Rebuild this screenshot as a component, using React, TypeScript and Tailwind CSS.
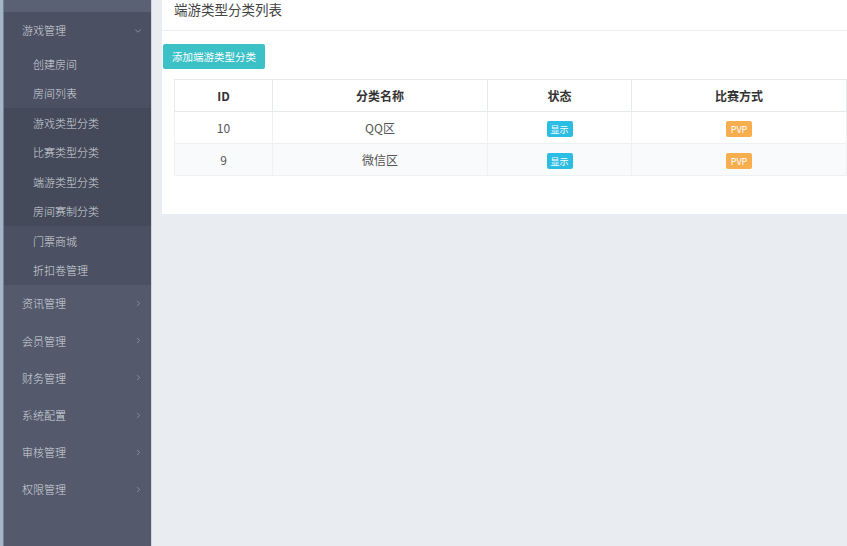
import { ChevronDown, ChevronRight } from "lucide-react";

const SUB_ITEMS = [
  { label: "创建房间", tone: "mid" },
  { label: "房间列表", tone: "mid" },
  { label: "游戏类型分类", tone: "dark" },
  { label: "比赛类型分类", tone: "dark" },
  { label: "端游类型分类", tone: "dark" },
  { label: "房间赛制分类", tone: "dark" },
  { label: "门票商城", tone: "mid" },
  { label: "折扣卷管理", tone: "mid" },
];

const MENUS = ["资讯管理", "会员管理", "财务管理", "系统配置", "审核管理", "权限管理"];

const ROWS = [
  { id: 10, name: "QQ区" },
  { id: 9, name: "微信区" },
];

const font = {
  fontFamily: '"Noto Sans CJK SC", "Noto Sans", sans-serif',
};

function Sidebar() {
  return (
    <div className="flex h-full shrink-0">
      {/* edge */}
      <div className="w-[3px] bg-[#a4b7c6]" />
      <div className="w-[1px] bg-[#6f8192]" />

      <div className="flex w-[147px] flex-col bg-[#545a6c] text-[11px] font-light text-[#d3d7de]">
        <div className="h-[12px] bg-[#5b6174]" />

        {/* 游戏管理 */}
        <div className="bg-[#4b5062]">
          <div className="flex h-[37px] items-center justify-between pl-[18px] pr-[8px]">
            <span>游戏管理</span>
            <ChevronDown size={10} strokeWidth={1.5} className="text-[#aab0bb]" />
          </div>

          {SUB_ITEMS.map((item) => (
            <div
              key={item.label}
              className={`flex h-[29.5px] items-center pl-[29px] ${
                item.tone === "dark" ? "bg-[#454a5a]" : "bg-[#4b5062]"
              }`}
            >
              {item.label}
            </div>
          ))}
        </div>

        {MENUS.map((label) => (
          <div
            key={label}
            className="flex h-[37.2px] items-center justify-between pl-[18px] pr-[8px]"
          >
            <span>{label}</span>
            <ChevronRight size={9} strokeWidth={1.5} className="text-[#aab0bb]" />
          </div>
        ))}
      </div>

      <div className="w-[1px] bg-[#cfd5db]" />
    </div>
  );
}

function Badge({ text, color }: { text: string; color: string }) {
  return (
    <span
      className={`inline-flex h-[16px] w-[26px] items-center justify-center rounded-[2px] text-[9px] text-white ${color}`}
    >
      {text}
    </span>
  );
}

export default function App() {
  return (
    <div
      className="flex h-[546px] w-[847px] overflow-hidden bg-[#e9edf1]"
      style={font}
    >
      <Sidebar />

      <div className="flex-1 pl-[10px]">
        <div className="h-[214px] bg-white">
          {/* Title */}
          <div className="h-[31px] border-b border-[#eceef1] pl-[12px]">
            <h1 className="text-[13.5px] leading-[18px] text-[#444]">
              端游类型分类列表
            </h1>
          </div>

          {/* Action */}
          <div className="pl-[1px] pt-[11px]">
            <button
              type="button"
              className="h-[25px] w-[102px] rounded-[2px] bg-[#3cc1c7] text-[10.5px] text-white"
            >
              添加端游类型分类
            </button>
          </div>

          {/* Table */}
          <div className="pl-[12px] pt-[10px]">
            <table className="w-[673px] border-collapse text-[12px]">
              <thead>
                <tr className="h-[32px] text-[#333]">
                  <th className="w-[98px] border border-[#e7eaec] font-bold">ID</th>
                  <th className="w-[215px] border border-[#e7eaec] font-bold">分类名称</th>
                  <th className="w-[144px] border border-[#e7eaec] font-bold">状态</th>
                  <th className="border border-[#e7eaec] font-bold">比赛方式</th>
                </tr>
              </thead>
              <tbody className="text-[#555]">
                {ROWS.map((row, i) => (
                  <tr
                    key={row.id}
                    className={`h-[32px] ${i % 2 === 1 ? "bg-[#f9fafc]" : "bg-white"}`}
                  >
                    <td className="border border-[#eef0f2] text-center">{row.id}</td>
                    <td className="border border-[#eef0f2] text-center">{row.name}</td>
                    <td className="border border-[#eef0f2] text-center">
                      <Badge text="显示" color="bg-[#2cbde2]" />
                    </td>
                    <td className="border border-[#eef0f2] text-center">
                      <Badge text="PVP" color="bg-[#f6ae4f]" />
                    </td>
                  </tr>
                ))}
              </tbody>
            </table>
          </div>
        </div>
      </div>
    </div>
  );
}
